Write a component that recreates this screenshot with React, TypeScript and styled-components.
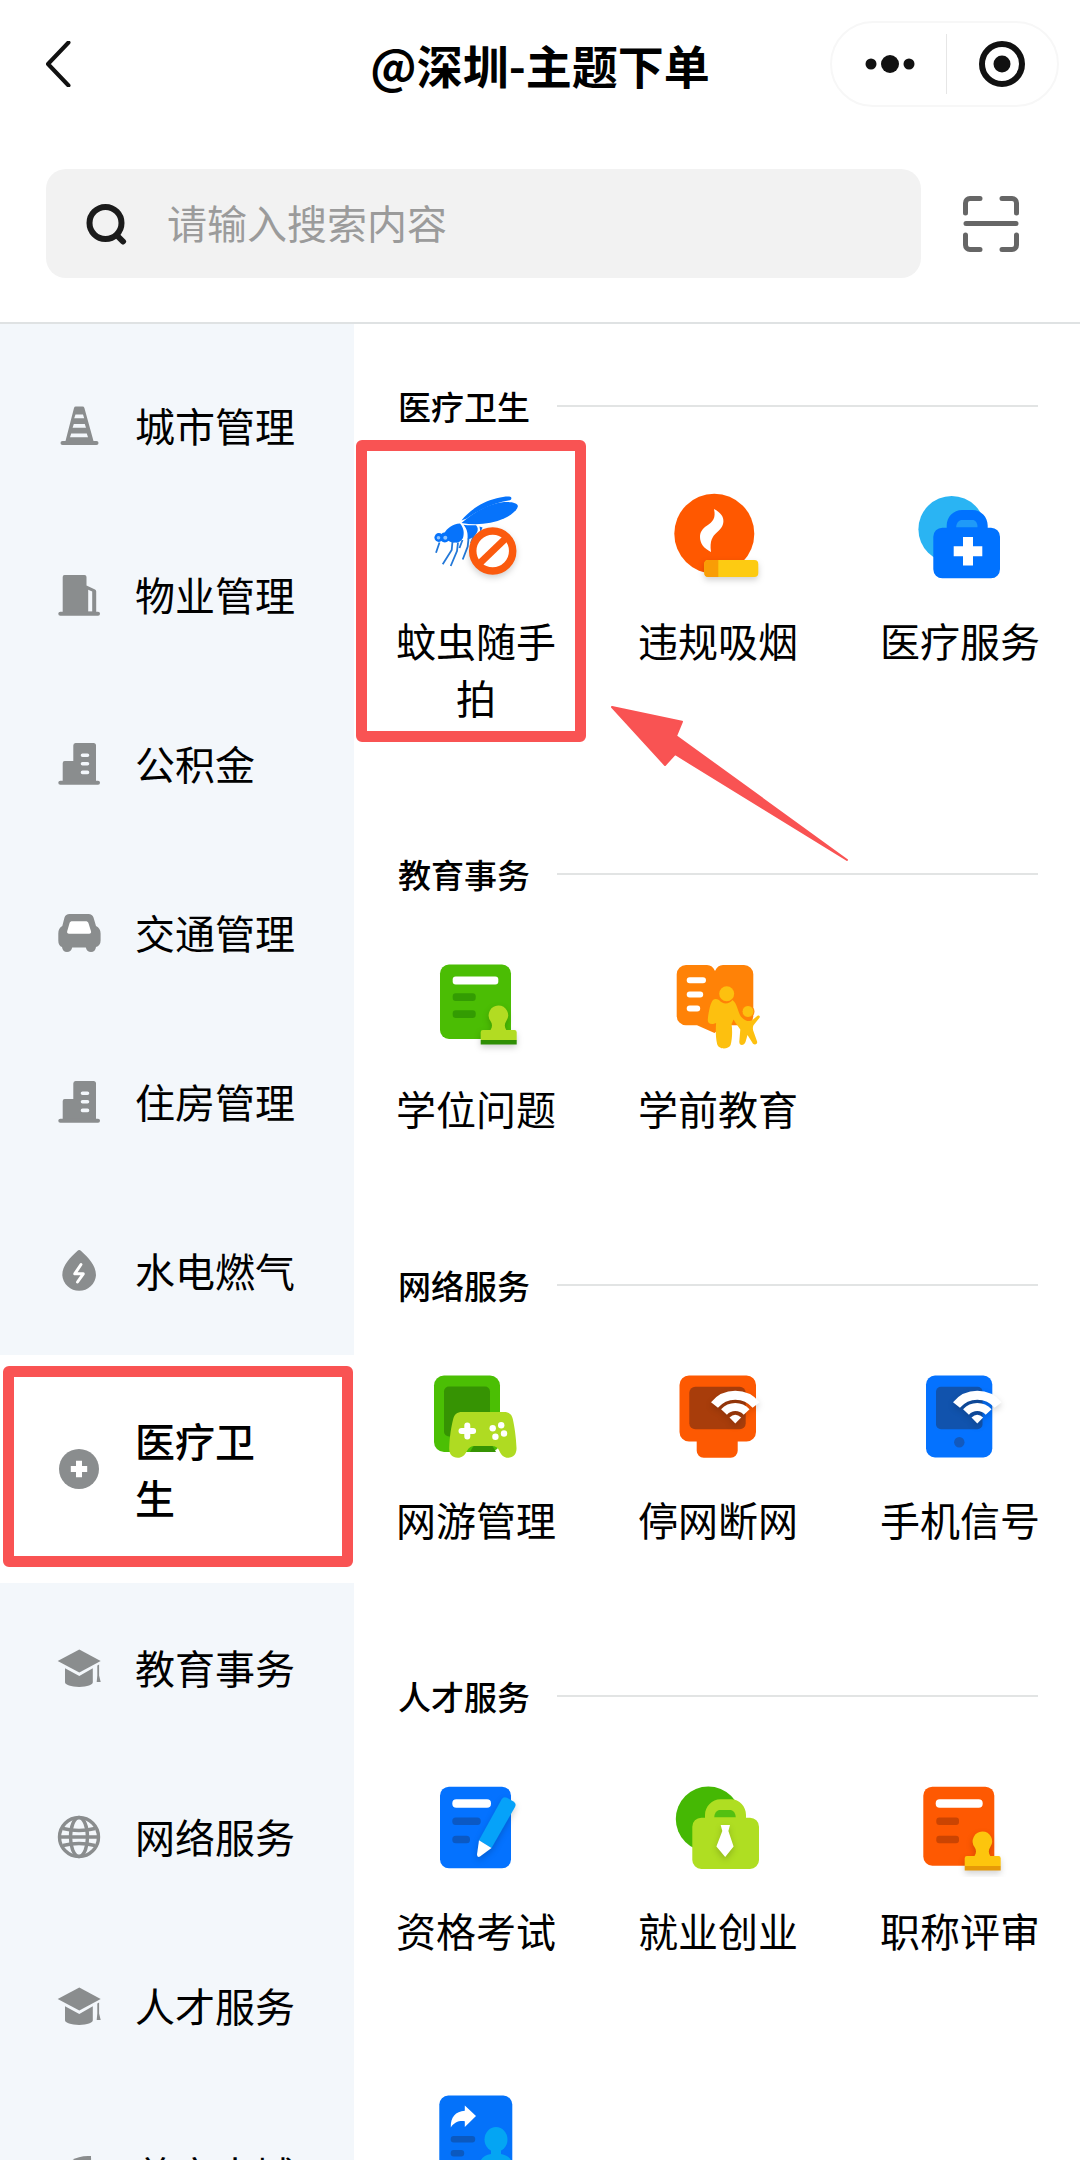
import React, { FC, ReactNode, useState } from 'react';
import styled, { createGlobalStyle } from 'styled-components';

type CategoryInfo = {
  name: string;
  icon: ReactNode;
};

type ServiceInfo = {
  name: string;
  icon: ReactNode;
  marked?: boolean;
};

type SectionInfo = {
  title: string;
  services: ServiceInfo[];
  arrow?: boolean;
};

const gray = '#8a8d8e';
const red = '#f95353';

const GlobalStyle = createGlobalStyle`
  * {
    box-sizing: border-box;
  }

  body {
    margin: 0;
    background: #fff;
    color: #000;
    font-family: 'Noto Sans CJK SC', sans-serif;
  }

  button {
    margin: 0;
    padding: 0;
    border: 0;
    background: none;
    color: inherit;
    font: inherit;
    cursor: pointer;
  }

  svg {
    display: block;
    flex: none;
  }
`;

/* category icons */

const SideIcon: FC<{ children: ReactNode }> = ({ children }) => (
  <svg width="44" height="44" viewBox="0 0 44 44" fill={gray} aria-hidden="true">
    {children}
  </svg>
);

const ConeIcon = () => (
  <SideIcon>
    <path d="M19 2.5h6.5a2 2 0 0 1 1.9 1.4L36.5 37h-28L17 3.9a2 2 0 0 1 2-1.4z" />
    <rect x="3.5" y="37" width="38" height="4" rx="2" />
    <path d="M18.5 10.5h7.5l1.2 3.8h-10zM16.8 20h11l1.2 3.8H15.6zM14.2 29.5h15.6l1.2 3.8H13z" fill="#f3f7fb" />
  </SideIcon>
);

const TowerIcon = () => (
  <SideIcon>
    <path d="M7.5 2h20a2 2 0 0 1 2 2v8.5l8.5 4a2 2 0 0 1 1.2 1.8V40H5.7V4a2 2 0 0 1 1.8-2z" />
    <path d="M31.2 16.8l4 1.8V38.5h-4z" fill="#f3f7fb" />
    <rect x="1.3" y="38.8" width="41.7" height="4" rx="2" />
  </SideIcon>
);

const BlocksIcon = () => (
  <SideIcon>
    <path d="M18.5 1h18A2.5 2.5 0 0 1 39 3.5V40H5.7V21a2 2 0 0 1 2-2h8.6V3.5A2.5 2.5 0 0 1 18.500 1z" />
    <rect x="1.3" y="38.8" width="41.7" height="4" rx="2" />
    <path d="M25.500 13.200h5M25.500 21.800h5M25.500 30.400h5" stroke="#f3f7fb" strokeWidth="3.600" strokeLinecap="round" />
  </SideIcon>
);

const CarIcon = () => (
  <SideIcon>
    <path d="M12.500 3h19c2.500 0 4.300 1.300 5 3.500l2.500 8.500c3 1.300 4.600 4 4.600 7.500v7c0 3.500-1.800 5.900-4.600 6.500-.3 3-2.200 5-5 5-2.600 0-4.500-1.500-5.200-4.500H15.200C14.500 39.500 12.600 41 10 41c-2.800 0-4.700-2-5-5-2.400-.8-3.700-3-3.700-6.500v-7c0-3.500 1.300-6.200 4-7.500l2.200-8.500C8.200 4.300 10 3 12.500 3z" />
    <path d="M15.500 10.300h13c1.600 0 2.500.6 3 2l2.500 8c.4 1.500-.3 2.400-1.800 2.400H12c-1.500 0-2.200-.9-1.800-2.400l2.300-8c.4-1.400 1.400-2 3-2z" fill="#fff" />
  </SideIcon>
);

const EnergyIcon = () => (
  <SideIcon>
    <path d="M20.300 2a2.700 2.700 0 0 1 3.800 0C31 8.300 39 16 39 26.200a16.900 16.900 0 0 1-33.700 0C5.300 16 13.500 8.300 20.300 2z" />
    <path d="M24 15.500l-6.300 9.300h8.600L20.500 33" fill="none" stroke="#fff" strokeWidth="3" strokeLinecap="round" strokeLinejoin="round" />
  </SideIcon>
);

const MedicalIcon = () => (
  <SideIcon>
    <circle cx="22" cy="22" r="20" />
    <path d="M22 13.800v16.400M13.800 22h16.400" stroke="#fff" strokeWidth="6" />
  </SideIcon>
);

const CapIcon = () => (
  <SideIcon>
    <path d="M22.300 3.500L43.700 15 22.300 26.600.7 15z" />
    <path d="M8 22.300l14.300 7.600 13.500-7.600v14c0 2.500-5.500 4.700-13.600 4.700S8 38.800 8 36.300z" />
    <path d="M40.300 19.500l1.800-1v11l1.600 6.500h-4l.6-6.500z" />
  </SideIcon>
);

const GlobeIcon = () => (
  <SideIcon>
    <g fill="none" stroke={gray} strokeWidth="3.400">
      <circle cx="22" cy="22" r="19.500" />
      <ellipse cx="22" cy="22" rx="8.500" ry="19.500" />
      <path d="M2.500 22h39M6 13.500c10 2.500 22 2.500 32 0M6 30.500c10-2.500 22-2.500 32 0" />
    </g>
  </SideIcon>
);

const LeafIcon = () => (
  <SideIcon>
    <path d="M34 3C20 2 8 8 6 22c-1 8 3 15 11 17 12 2 18-9 17-36z" />
  </SideIcon>
);

/* service icons */

const ServiceIcon: FC<{ children: ReactNode }> = ({ children }) => (
  <svg width="100" height="100" viewBox="0 0 100 100" aria-hidden="true">
    {children}
  </svg>
);

const Raised = styled.g`
  filter: drop-shadow(0 3px 3px rgba(0, 0, 0, 0.18));
`;

const Stamp: FC<{ color: string; base: string; y: number }> = ({ color, base, y }) => (
  <Raised transform={`translate(0 ${y})`}>
    <path
      d="M72.300 50.500a9.800 9.800 0 0 1 8 15.500c-2 3-2 6 0 9h8.200a2.200 2.200 0 0 1 2.200 2.200V85h-36v-7.800a2.200 2.200 0 0 1 2.200-2.200h7.600c2-3 2-6 0-9a9.800 9.800 0 0 1 7.800-15.500z"
      fill={color}
    />
    <path d="M54.700 85h36v4.500h-36z" fill={base} />
  </Raised>
);

const Wifi = () => (
  <Raised>
    <path d="M46.500 39a27 27 0 0 1 41.600 0" fill="none" stroke="#fff" strokeWidth="9" />
    <path d="M56 46a15.500 15.500 0 0 1 22.600 0" fill="none" stroke="#fff" strokeWidth="8" />
    <path d="M61.500 51.500q5.800-5.600 11.600 0L67.300 57.500z" fill="#fff" />
  </Raised>
);

const MosquitoIcon = () => (
  <ServiceIcon>
    <g fill="#0673fb">
      <path d="M35.500 33.500C42 25 55 15 70.700 11.300c6-1.400 10-2 13.500-1.600 1.800.4 1.500 3-.5 3.500C68 15.500 52 23 40.700 31.500z" />
      <path d="M35.500 36C46 26.500 62 16.500 78 15c7-.6 14.500 1 13.800 4.600-.8 4-7.500 9-13.800 12C66 37 50 38.500 35.500 36z" />
      <path d="M18 46.500c3-5 8.500-9.800 16-10 3.600 4 4.600 9 3 14.500-2 3.500-4.500 5-8 4.600-3 .2-5-.8-7.500-2.300z" />
      <path d="M37.500 37.800c4 .6 8 .6 12.500.4 2 2 2.300 4.500 1 7-1.500 3.500-5 6.200-9.500 7.400.5-5 0-10.300-4-14.800z" />
      <path d="M53.500 39.500l3 1-2 5z" />
      <circle cx="12.800" cy="50.500" r="4.400" />
      <circle cx="18.800" cy="50.500" r="5" />
    </g>
    <circle cx="12.500" cy="50.700" r="1.800" fill="#8fc4ff" />
    <circle cx="19.300" cy="50.700" r="2" fill="#8fc4ff" />
    <path
      d="M13.500 55.500L10 65.700M26.500 54.500l-.8 8.500-9 14.300M32 55.500l-1 8.500-6.300 15M36.500 53l-3 8M42.500 51.500l-.8 8-5 13M48 48l-3 8"
      fill="none"
      stroke="#2378d8"
      strokeWidth="1.800"
    />
    <Raised>
      <circle cx="66.700" cy="64" r="20" fill="#fff" stroke="#fb5a0e" strokeWidth="7.500" />
      <path d="M53.500 76.500l26-25" stroke="#fb5a0e" strokeWidth="7" />
    </Raised>
  </ServiceIcon>
);

const SmokeIcon = () => (
  <ServiceIcon>
    <circle cx="46.300" cy="46.700" r="40" fill="#ff5800" />
    <path
      d="M46 22c6.500 3.500 9.800 7.500 9.400 12.500-.3 5-2.700 7.500-6.600 11-4.300 4-7.300 8-5.800 19.500-7-3.500-11-8.500-11-15 0-4.800 2.500-8.300 6.800-11.200C45 34.500 48 31 46 22z"
      fill="#fff"
    />
    <Raised>
      <rect x="36.300" y="73" width="54" height="17" rx="4" fill="#fdcb12" />
      <path d="M40.300 73h10v17h-10a4 4 0 0 1-4-4v-9a4 4 0 0 1 4-4z" fill="#f99d06" />
    </Raised>
  </ServiceIcon>
);

const MedicalBagIcon = () => (
  <ServiceIcon>
    <circle cx="41.700" cy="42.300" r="33.300" fill="#2ab4f3" />
    <path
      d="M52 23h10.500C71 23 77.700 30 77.700 38.500v2.200H81a9 9 0 0 1 9 9v32.600a9 9 0 0 1-9 9H32.300a9 9 0 0 1-9-9V49.700a9 9 0 0 1 9-9h4.400v-2.200C36.700 30 43.500 23 52 23z"
      fill="#0072ff"
    />
    <path d="M51 33h12.500q4 1.500 4 7.200H46.200Q46.500 34.500 51 33z" fill="#1f9af8" />
    <path d="M58 50v28.600M43.700 64.300h28.600" stroke="#fff" strokeWidth="10" />
  </ServiceIcon>
);

const SchoolPlaceIcon = () => (
  <ServiceIcon>
    <rect x="14" y="9.500" width="71" height="74.500" rx="9" fill="#4bbd04" />
    <rect x="26.700" y="21.500" width="45.600" height="8" rx="3" fill="#fff" />
    <rect x="26.700" y="38.300" width="23" height="7.700" rx="3" fill="#339c02" />
    <rect x="26.700" y="55.200" width="23" height="7.700" rx="3" fill="#339c02" />
    <Stamp color="#b2dc22" base="#2f8f04" y={0} />
  </ServiceIcon>
);

const PreschoolIcon = () => (
  <ServiceIcon>
    <path
      d="M18 10h21q5.500 0 8 6 2.500-6 8-6h21a9.300 9.300 0 0 1 9.300 9.300V61a9.300 9.300 0 0 1-9.300 9.300H56L46.500 78 29 70.300H18A9.300 9.300 0 0 1 8.700 61V19.300A9.300 9.300 0 0 1 18 10z"
      fill="#ff8207"
    />
    <path d="M21.700 25.200H35M21.700 39.600h10.500M21.700 53.600h7.500" stroke="#fff" strokeWidth="6" strokeLinecap="round" />
    <g fill="#fdc00f">
      <circle cx="58.700" cy="38.700" r="7.500" />
      <path d="M51 45c3.500 4.500 10 4.500 13.500 0 4.500 3.500 5 10 7.500 15 1.500 3 4 4.500 6 5.500 2 1 5 .5 6.500-.5l5-4.300c1.500-1 3 .5 2 2l-6 7.500c-1 2-.8 5 .3 7l3.200 9c1 3-2 4-4 2.500L79.500 80l-2 7c-1.500 4-6.500 4-6.200-.5l1-12-5-7-1.700-3-2 4.500c1 8 .5 15-1 21-2 4.500-12 5-13.500-1-1.500-7-1.500-14-1-21l-3 1c-3.500.5-5.500-1.500-5.300-4.500.5-6 2.500-17 5.200-19.500 1.500-1.500 3.500-1.500 6 0z" />
      <circle cx="80" cy="56.500" r="6" stroke="#ff8207" strokeWidth="1" />
    </g>
  </ServiceIcon>
);

const GameIcon = () => (
  <ServiceIcon>
    <rect x="8" y="9.500" width="66" height="76.500" rx="10" fill="#4bbf04" />
    <rect x="18" y="20.500" width="46" height="50" rx="5" fill="#369303" />
    <path d="M44 86l4-7h18l4 7z" fill="#369303" />
    <path
      d="M36 46h42c5 0 8 2.500 8.800 7 1.700 8 3.200 17 3.700 29 .2 6-3 9.700-8.500 9.700-4 0-6.500-2.200-8.500-6.500C72 81.500 69.500 80 66 80H48.500c-3.500 0-5.700 1.500-7.700 5.200-2.300 4.300-4.600 6.500-9 6.500-5.800 0-8.800-3.700-8.600-9.700.5-12 2-21 4-29 1-4.500 4-7 8.800-7z"
      fill="#afdb22"
    />
    <path d="M41.300 59.500v11M35.500 65h11.600" stroke="#fff" strokeWidth="6" strokeLinecap="round" />
    <g fill="#fff">
      <circle cx="66.700" cy="62.300" r="3.200" />
      <circle cx="75.200" cy="59.200" r="3.200" />
      <circle cx="78" cy="67.500" r="3.200" />
      <circle cx="69.400" cy="70.700" r="3.200" />
    </g>
  </ServiceIcon>
);

const MonitorIcon = () => (
  <ServiceIcon>
    <path
      d="M21 9.500h57.500A9.500 9.500 0 0 1 88 19v47a9.500 9.500 0 0 1-9.500 9.500h-8.800v9.200a7 7 0 0 1-7 7h-27a7 7 0 0 1-7-7v-9.200H21a9.500 9.500 0 0 1-9.500-9.500V19A9.500 9.500 0 0 1 21 9.500z"
      fill="#fd5902"
    />
    <rect x="21.300" y="20.700" width="56.400" height="42.600" rx="6" fill="#a83d0b" />
    <Wifi />
  </ServiceIcon>
);

const PhoneIcon = () => (
  <ServiceIcon>
    <rect x="16" y="9.500" width="66.300" height="82" rx="9" fill="#0472ff" />
    <rect x="26" y="20.700" width="46.500" height="42.600" rx="5" fill="#1153ad" />
    <Wifi />
    <circle cx="49.300" cy="76.200" r="5.200" fill="#1259bd" />
  </ServiceIcon>
);

const ExamIcon = () => (
  <ServiceIcon>
    <rect x="14" y="9.700" width="71" height="81.600" rx="9" fill="#0472ff" />
    <rect x="26.300" y="22.300" width="38.700" height="8.400" rx="4" fill="#fff" />
    <rect x="26.300" y="40.500" width="28.400" height="7.500" rx="3.500" fill="#0b59c4" />
    <rect x="26.300" y="58.700" width="17.700" height="7.500" rx="3.500" fill="#0b59c4" />
    <Raised>
      <path d="M75.500 22.500q2-3.500 5.500-1.800l6.500 3.800q3.300 2 1.500 5.500L65.500 71 53 63.300z" fill="#06a2f9" />
      <path d="M53 63.300L65.500 71 54 79.600q-3 1.200-3-2z" fill="#fff" />
    </Raised>
  </ServiceIcon>
);

const JobIcon = () => (
  <ServiceIcon>
    <circle cx="40.300" cy="42" r="32.500" fill="#45b804" />
    <path
      d="M52.500 22.300H63C71.500 22.300 78 29.500 78 38v2.700h4a9 9 0 0 1 9 9V83a9 9 0 0 1-9 9H33.300a9 9 0 0 1-9-9V49.700a9 9 0 0 1 9-9H37V38c0-8.500 7-15.700 15.500-15.700z"
      fill="#afde22"
    />
    <path d="M51 33h12q4.500 1.500 4.700 7.300H46.300Q46.500 34.500 51 33z" fill="#53c011" />
    <Raised>
      <path d="M52.700 48H62l-1.600 6 5.200 15.500L57.200 80l-8.800-10.500L54.300 54z" fill="#fff" />
    </Raised>
  </ServiceIcon>
);

const ReviewIcon = () => (
  <ServiceIcon>
    <rect x="13.300" y="9.700" width="71" height="79" rx="9" fill="#fe5902" />
    <rect x="25.700" y="22.300" width="47" height="8.400" rx="4" fill="#fff" />
    <rect x="26.300" y="40.500" width="22.700" height="7.500" rx="3" fill="#cb4402" />
    <rect x="26.300" y="58.700" width="22.700" height="7.500" rx="3" fill="#cb4402" />
    <Stamp color="#fdc50d" base="#e69a08" y={4} />
  </ServiceIcon>
);

const TransferIcon = () => (
  <ServiceIcon>
    <rect x="13.300" y="10.500" width="73" height="82" rx="9" fill="#0472fa" />
    <path d="M38.800 20.500L50 31 38.800 42v-5.800c-6-.7-10.500 1-14 6.300C24.500 32 29.500 26.500 38.800 25.800z" fill="#fff" />
    <rect x="24.700" y="51" width="24.500" height="6.500" rx="3" fill="#0b59c0" />
    <rect x="24.700" y="65" width="13.500" height="6.500" rx="3" fill="#0b59c0" />
    <ellipse cx="70" cy="54.500" rx="11.500" ry="12.500" fill="#04a5f3" />
    <path d="M65 64h10v5q12 2 12 14v9H53v-9q0-12 12-14z" fill="#04a5f3" />
  </ServiceIcon>
);

const categories: CategoryInfo[] = [
  { name: '城市管理', icon: <ConeIcon /> },
  { name: '物业管理', icon: <TowerIcon /> },
  { name: '公积金', icon: <BlocksIcon /> },
  { name: '交通管理', icon: <CarIcon /> },
  { name: '住房管理', icon: <BlocksIcon /> },
  { name: '水电燃气', icon: <EnergyIcon /> },
  { name: '医疗卫生', icon: <MedicalIcon /> },
  { name: '教育事务', icon: <CapIcon /> },
  { name: '网络服务', icon: <GlobeIcon /> },
  { name: '人才服务', icon: <CapIcon /> },
  { name: '养育水域', icon: <LeafIcon /> },
];

const sections: SectionInfo[] = [
  {
    title: '医疗卫生',
    arrow: true,
    services: [
      { name: '蚊虫随手拍', icon: <MosquitoIcon />, marked: true },
      { name: '违规吸烟', icon: <SmokeIcon /> },
      { name: '医疗服务', icon: <MedicalBagIcon /> },
    ],
  },
  {
    title: '教育事务',
    services: [
      { name: '学位问题', icon: <SchoolPlaceIcon /> },
      { name: '学前教育', icon: <PreschoolIcon /> },
    ],
  },
  {
    title: '网络服务',
    services: [
      { name: '网游管理', icon: <GameIcon /> },
      { name: '停网断网', icon: <MonitorIcon /> },
      { name: '手机信号', icon: <PhoneIcon /> },
    ],
  },
  {
    title: '人才服务',
    services: [
      { name: '资格考试', icon: <ExamIcon /> },
      { name: '就业创业', icon: <JobIcon /> },
      { name: '职称评审', icon: <ReviewIcon /> },
      { name: '', icon: <TransferIcon /> },
    ],
  },
];

const App: FC = () => {
  const [active, setActive] = useState<string>('医疗卫生');
  const [keyword, setKeyword] = useState<string>('');

  return (
    <Page>
      <GlobalStyle />
      <TitleBar>
        <BackButton aria-label="返回">
          <svg width="26" height="46" viewBox="0 0 26 46" fill="none" stroke="#111" strokeWidth="4">
            <path d="M23.500 1.500L3 23l20.500 21.500" strokeLinecap="round" strokeLinejoin="round" />
          </svg>
        </BackButton>
        <Title>@深圳-主题下单</Title>
        <Capsule>
          <CapsuleButton aria-label="更多">
            <svg width="50" height="20" viewBox="0 0 50 20" fill="#111">
              <circle cx="6" cy="10" r="5.500" />
              <circle cx="25" cy="10" r="9" />
              <circle cx="44" cy="10" r="5.500" />
            </svg>
          </CapsuleButton>
          <CapsuleDivider />
          <CapsuleButton aria-label="关闭">
            <svg width="46" height="46" viewBox="0 0 46 46">
              <circle cx="23" cy="23" r="20" fill="none" stroke="#111" strokeWidth="6" />
              <circle cx="23" cy="23" r="8.500" fill="#111" />
            </svg>
          </CapsuleButton>
        </Capsule>
      </TitleBar>
      <SearchRow>
        <SearchBox>
          <svg width="42" height="42" viewBox="0 0 42 42" fill="none" stroke="#1b1b1b" strokeWidth="6" strokeLinecap="round">
            <circle cx="19.500" cy="20" r="16" />
            <path d="M31.500 33l5.500 5.500" />
          </svg>
          <SearchInput
            aria-label="搜索"
            placeholder="请输入搜索内容"
            value={keyword}
            onChange={(e) => setKeyword(e.target.value)}
          />
        </SearchBox>
        <button aria-label="扫一扫">
          <svg width="56" height="56" viewBox="0 0 56 56" fill="none" stroke="#666" strokeWidth="5" strokeLinecap="round">
            <path d="M2.500 17V7a4.500 4.500 0 0 1 4.500-4.500h10M39 2.500h10A4.500 4.500 0 0 1 53.500 7v10M53.500 39v10a4.500 4.500 0 0 1-4.500 4.500H39M17 53.500H7A4.500 4.500 0 0 1 2.500 49V39M3 27.500h50" />
          </svg>
        </button>
      </SearchRow>
      <Content>
        <Sidebar>
          {categories.map(({ name, icon }) => (
            <Category key={name} $active={name === active} onClick={() => setActive(name)}>
              {icon}
              <CategoryName $active={name === active}>{name}</CategoryName>
              {name === active && <CategoryMark />}
            </Category>
          ))}
        </Sidebar>
        <Services>
          {sections.map(({ title, services, arrow }) => (
            <Section key={title}>
              <SectionTitle>{title}</SectionTitle>
              <ServiceGrid>
                {services.map(({ name, icon, marked }) => (
                  <Service key={name}>
                    {icon}
                    <ServiceName>{name}</ServiceName>
                    {marked && <ServiceMark />}
                  </Service>
                ))}
              </ServiceGrid>
              {arrow && (
                <Arrow width="238" height="156" viewBox="0 0 238 156" aria-hidden="true">
                  <path d="M1 1l70 14.700-6 14.300 171 124-172-106-10 11z" fill={red} stroke={red} strokeWidth="2" strokeLinejoin="round" />
                </Arrow>
              )}
            </Section>
          ))}
        </Services>
      </Content>
    </Page>
  );
};

const Page = styled.div`
  display: flex;
  flex-direction: column;
  height: 100vh;
  overflow: hidden;
`;

const TitleBar = styled.header`
  display: grid;
  grid-template-columns: 1fr auto 1fr;
  align-items: center;
  flex: none;
  height: 128px;
  padding: 0 21px;
`;

const BackButton = styled.button`
  justify-self: start;
  padding: 0 24px;
`;

const Title = styled.h1`
  margin: 0;
  font-size: 46px;
  font-weight: 700;
  line-height: 64px;
`;

const Capsule = styled.div`
  display: flex;
  align-items: center;
  justify-self: end;
  width: 229px;
  height: 86px;
  padding-left: 3px;
  border: 2px solid #f7f7f7;
  border-radius: 43px;
`;

const CapsuleButton = styled.button`
  display: flex;
  flex: 1;
  align-items: center;
  justify-content: center;
  height: 100%;
`;

const CapsuleDivider = styled.span`
  width: 1px;
  height: 60px;
  background: #e6e6e6;
`;

const SearchRow = styled.div`
  display: flex;
  align-items: center;
  flex: none;
  gap: 42px;
  padding: 41px 61px 44px 46px;
  border-bottom: 2px solid #dfe2e3;
`;

const SearchBox = styled.label`
  display: flex;
  align-items: center;
  flex: 1;
  gap: 39px;
  height: 109px;
  padding: 0 40px;
  border-radius: 20px;
  background: #f2f2f2;
`;

const SearchInput = styled.input`
  flex: 1;
  min-width: 0;
  height: 60px;
  padding: 0 0 4px;
  border: 0;
  outline: 0;
  background: none;
  font-family: inherit;
  font-size: 40px;

  &::placeholder {
    color: #9b9b9b;
    opacity: 1;
  }
`;

const Content = styled.div`
  display: flex;
  flex: 1;
  min-height: 0;
`;

const Sidebar = styled.nav`
  flex: none;
  width: 354px;
  padding-top: 17px;
  overflow-y: auto;
  scrollbar-width: none;
  background: #f3f7fb;
`;

const Category = styled.button<{ $active: boolean }>`
  position: relative;
  display: flex;
  align-items: center;
  gap: 34px;
  width: 100%;
  padding: ${({ $active }) => ($active ? '57px' : '56px 57px')};
  background: ${({ $active }) => ($active ? '#fff' : 'transparent')};
  text-align: left;
`;

const CategoryName = styled.span<{ $active: boolean }>`
  max-width: ${({ $active }) => ($active ? '3em' : 'none')};
  font-size: 40px;
  font-weight: ${({ $active }) => ($active ? 500 : 400)};
  line-height: 57px;
  white-space: ${({ $active }) => ($active ? 'normal' : 'nowrap')};
`;

const CategoryMark = styled.span`
  position: absolute;
  inset: 11px 1px 16px 3px;
  border: 11px solid ${red};
  border-radius: 6px;
`;

const Services = styled.main`
  flex: 1;
  min-width: 0;
  padding: 59px 39px 0 41px;
  overflow-y: auto;
  scrollbar-width: none;
`;

const Section = styled.section`
  position: relative;
  margin-bottom: 125px;
`;

const SectionTitle = styled.h2`
  display: flex;
  align-items: center;
  gap: 27px;
  margin: 0 0 58px;
  padding: 0 3px;
  font-size: 33px;
  font-weight: 500;
  line-height: 46px;

  &::after {
    content: '';
    flex: 1;
    height: 2px;
    background: #e2e4e4;
  }
`;

const ServiceGrid = styled.div`
  display: grid;
  grid-template-columns: repeat(3, 1fr);
  gap: 126px 80px;
`;

const Service = styled.button`
  position: relative;
  display: flex;
  flex-direction: column;
  align-items: center;
  gap: 25px;
`;

const ServiceName = styled.span`
  font-size: 40px;
  line-height: 57px;
`;

const ServiceMark = styled.span`
  position: absolute;
  inset: -47px -29px -16px -39px;
  border: 11px solid ${red};
  border-radius: 6px;
`;

const Arrow = styled.svg`
  position: absolute;
  top: 323px;
  left: 216px;
`;

export default App;
